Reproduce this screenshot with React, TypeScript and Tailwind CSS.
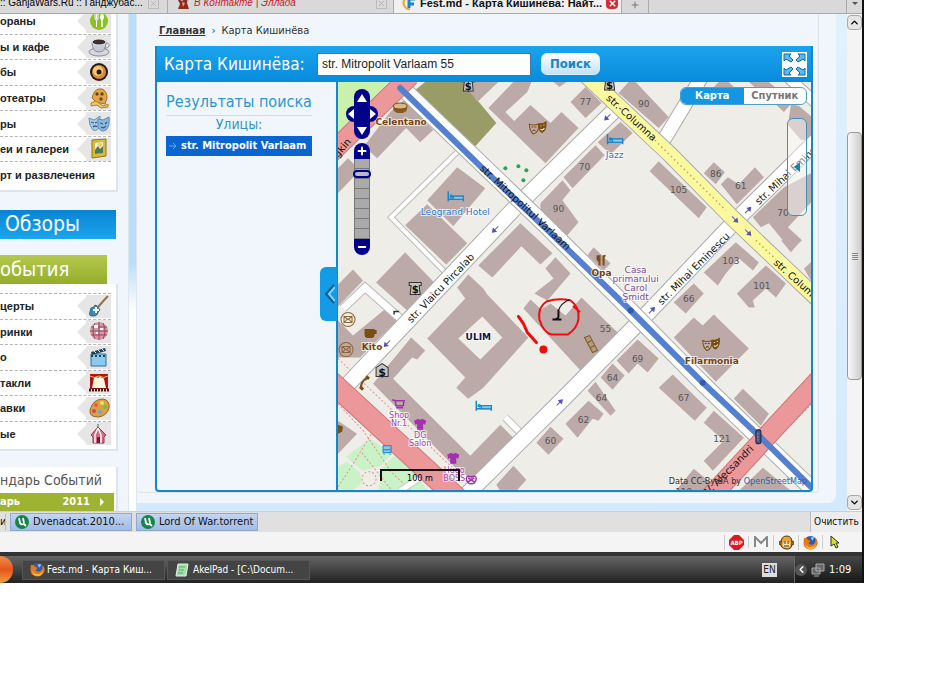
import React from "react";
import { Plus, X, ChevronUp, ChevronDown, ChevronLeft } from "lucide-react";

const places = [
  { title: "ораны", icon: "food" },
  { title: "ы и кафе", icon: "coffee" },
  { title: "бы", icon: "speaker" },
  { title: "отеатры", icon: "cinema" },
  { title: "ры", icon: "masks" },
  { title: "еи и галереи", icon: "frame" },
  { title: "рт и развлечения", icon: "" },
];

const events = [
  { title: "церты", icon: "guitar" },
  { title: "ринки", icon: "disco" },
  { title: "о", icon: "clapper" },
  { title: "такли", icon: "stage" },
  { title: "авки", icon: "palette" },
  { title: "ые", icon: "tent" },
];

const fields = ["415,90 425,82 462,82 496,123 475,146"];

const parks = [
  "346,456 370,438 392,453 381,465 363,470 354,463",
  "383,466 394,455 409,466 428,490 378,490",
  "338,466 347,461 360,472 362,482 352,490 338,490",
];

const buildings = [
  "390,112 404,100 433,130 420,142 406,128 377,158 364,146",
  "338,168 348,158 360,170 338,193",
  "463,82 498,82 477,102",
  "488,108 513,82 531,82 527,92 505,112 514,121 530,105 550,123 561,112 578,128 545,163",
  "553,82 566,82 559,87",
  "585,87 601,103 585,118 570,102",
  "618,93 628,82 635,82 668,117 658,128",
  "620,122 632,133 610,154 597,142",
  "595,145 604,155 572,188 563,177",
  "540,203 562,180 570,190 562,200 578,222 566,236 540,212",
  "658,161 706,207 698,218 649,171",
  "713,162 724,172 715,184 703,173",
  "727,177 738,184 754,167 763,177 736,204 720,184",
  "783,187 812,172 812,200 787,227 801,240 790,250 768,223 760,227 752,217",
  "790,104 798,106 812,118 812,140 800,140 787,125",
  "770,100 776,92 790,104 783,112",
  "712,88 718,82 728,82 734,88",
  "748,82 768,82 775,88 755,88",
  "457,167 485,188 453,226 427,200",
  "405,225 427,204 467,243 446,264",
  "405,252 435,283 407,310 376,282",
  "353,269 363,280 338,306 338,284",
  "387,307 397,320 360,357 338,357 338,320 353,335",
  "478,265 520,223 552,253 540,264 521,246 492,277",
  "555,257 570,273 547,300 534,293 553,278 545,268",
  "523,308 530,299 541,309 550,303 565,315 581,297 617,332 580,370",
  "411,337 425,350 417,359 412,357 393,378 470,455 500,424 513,437 483,468 472,478 458,470 373,383",
  "338,420 357,433 338,453",
  "550,426 563,438 548,454 536,442",
  "496,484 513,465 526,479 516,490 500,490",
  "588,400 603,413 598,420 592,418 577,437 565,423",
  "595,381 615,410 610,415 587,390",
  "612,363 624,375 612,389 600,377",
  "637,339 658,358 647,372 637,363 628,373 616,360",
  "672,374 706,407 694,420 658,387",
  "713,314 748,348 715,381 673,337 693,317 702,325",
  "693,283 703,293 685,313 673,302",
  "735,242 758,262 752,270 738,258 725,273 717,285 703,272",
  "765,265 785,283 775,297 765,288 752,300 754,307 748,307 736,293",
  "593,247 610,263 603,270 587,255",
  "742,388 768,413 760,425 733,398",
  "713,410 743,437 712,470 703,460 723,440 703,422",
  "693,468 710,482 702,490 675,490",
  "762,467 790,490 738,490",
  "780,240 800,240 790,252",
  "803,268 812,260 812,284",
];

const houseNumbers: [number, number, string][] = [
  [585, 105, "77"],
  [643, 107, "90"],
  [584, 170, "70"],
  [558, 212, "90"],
  [678, 193, "105"],
  [715, 177, "86"],
  [740, 189, "61"],
  [782, 216, "70"],
  [730, 264, "103"],
  [761, 289, "101"],
  [688, 302, "66"],
  [605, 331, "55"],
  [637, 361, "69"],
  [612, 380, "64"],
  [601, 400, "64"],
  [583, 422, "62"],
  [550, 443, "60"],
  [683, 400, "67"],
  [721, 441, "121"],
  [683, 494, "119"],
];

const streets: [number, number, number, string][] = [
  [479, 169, 43, "str. Mitropolitul Varlaam"],
  [411, 323, -46, "str. Vlaicu Pircalab"],
  [661, 305, -45, "str. Mihai Eminescu"],
  [758, 205, -43, "str. Mihai Eminescu"],
  [605, 99, 42, "str.-Columna"],
  [772, 263, 42, "str. Columna"],
  [708, 494, -45, "V. Alecsandri"],
  [338, 158, -50, "gkin"],
];

const arrows: [number, number, number][] = [
  [607, 117, 135],
  [495, 229, 135],
  [387, 343, 135],
  [747, 210, -45],
  [651, 310, -45],
  [559, 402, -45],
  [734, 219, 45],
  [747, 232, 45],
];

const SideIcon = ({ name }: { name: string }) => (
  <svg viewBox="0 0 22 22" className="size-[22px]" aria-hidden="true">
    {name === "food" && (
      <>
        <circle cx="11" cy="11" r="9" fill="#8cc220" />
        <path d="M7 4v4q0 2 1.500 2v7M8.500 4v5M10 4v4q0 2-1.500 2" stroke="#fff" strokeWidth="1" fill="none" />
        <ellipse cx="14" cy="7" rx="2" ry="3" fill="#fff" />
        <path d="M14 9v8" stroke="#fff" strokeWidth="1.500" />
      </>
    )}
    {name === "coffee" && (
      <>
        <ellipse cx="11" cy="16" rx="10" ry="4" fill="#d5d6df" stroke="#8c8f9e" />
        <path d="M4 6q0 10 7 10t7-10z" fill="#c5c8d6" stroke="#8c8f9e" />
        <ellipse cx="11" cy="6" rx="7" ry="3" fill="#3b2e2c" stroke="#e8e8ee" />
        <path d="M18 7q4 0 3 3t-5 2" stroke="#8c8f9e" fill="none" />
      </>
    )}
    {name === "speaker" && (
      <>
        <circle cx="11" cy="11" r="9" fill="#251a16" />
        <circle cx="11" cy="11" r="7" fill="#d88b2c" />
        <circle cx="10" cy="10" r="5" fill="#f5c877" />
        <circle cx="11" cy="11" r="2.500" fill="#2b1a12" />
      </>
    )}
    {name === "cinema" && (
      <>
        <path d="M5 8q2-7 9-6 5 2 5 9l-2 6-9-2-4-4z" fill="#e0a947" stroke="#a5701c" />
        <circle cx="9" cy="7" r="1.700" fill="#6d4517" />
        <circle cx="14" cy="7" r="1.700" fill="#6d4517" />
        <circle cx="13" cy="12" r="1.700" fill="#6d4517" />
        <path d="M3 16l5-2 7 5 5-2v3l-7 1-4-3-6 1z" fill="#e9c56b" stroke="#b3812a" />
      </>
    )}
    {name === "masks" && (
      <>
        <path d="M1 5l5 2 6-4v9q-2 7-7 5-4-4-4-12z" fill="#a8cbe8" stroke="#6793bb" />
        <path d="M10 6l5 1 6-3q1 9-3 13-5 3-8-3z" fill="#8db8de" stroke="#5c89b5" />
        <path d="M3 9l3 1M7 10l2-1M5 14q2-2 4 0M12 10l3 1M17 11l2-2M13 14q3 2 5-1" stroke="#315e8b" strokeWidth="1.300" fill="none" />
      </>
    )}
    {name === "frame" && (
      <>
        <path d="M4 2l14-1v17l-14 2z" fill="#d9bb3c" stroke="#94780f" />
        <path d="M7 5l8-1v11l-8 1z" fill="#e3eedd" />
        <path d="M7 12l3-4 2 3 3-3v7l-8 1z" fill="#507a55" />
        <circle cx="12" cy="7" r="2" fill="#f0ce51" />
      </>
    )}
    {name === "guitar" && (
      <>
        <path d="M10 12L18 3l2-2" stroke="#94714d" strokeWidth="2" />
        <path d="M3 13q3 0 4-3l2 1 3 4-2 2q0 4-5 4t-3-4z" fill="#388db4" stroke="#276889" />
        <path d="M8 12v6M5 15h6" stroke="#fff" strokeWidth="2" />
      </>
    )}
    {name === "disco" && (
      <>
        <circle cx="11" cy="10" r="9" fill="#dd97a3" />
        <path d="M3 6h16M2 10h18M3 14h16M7 2q-4 8 0 16M11 1v18M15 2q4 8 0 16" stroke="#8d4a62" strokeWidth="1" fill="none" />
        <path d="M6 4h4v3H6zM12 7h3v2h-3zM8 11h2v2H8z" fill="#fff" />
      </>
    )}
    {name === "clapper" && (
      <>
        <path d="M3 8h15v12H3z" fill="#8bc9ef" stroke="#31739b" />
        <path d="M3 6l14-4 1 3-14 4z" fill="#244353" />
        <path d="M6 5l2 2M10 4l2 2M14 3l2 2" stroke="#cfe5f2" />
        <path d="M3 10h15" stroke="#244353" strokeWidth="2" strokeDasharray="2 2" />
      </>
    )}
    {name === "stage" && (
      <>
        <path d="M2 2h18v15H2z" fill="#b01216" />
        <path d="M6 6q2-2 4 0 2-2 4 0 2 0 2 1l2 9H4z" fill="#fff7de" />
        <path d="M2 4q4 3 9 0 5 3 9 0" stroke="#f2c75a" fill="none" />
        <path d="M1 18h20" stroke="#4d1a10" strokeWidth="3" strokeDasharray="2 1" />
      </>
    )}
    {name === "palette" && (
      <>
        <path d="M2 13Q5 2 15 2q7 1 6 9-2 8-11 9-9 0-8-7z" fill="#d8a24c" stroke="#976420" />
        <circle cx="14" cy="6" r="2" fill="#f0e052" />
        <circle cx="17" cy="10" r="2" fill="#84b83d" />
        <circle cx="8" cy="8" r="2" fill="#e3652d" />
        <circle cx="6" cy="14" r="2" fill="#d4455a" />
        <circle cx="12" cy="15" r="2" fill="#6fa5c9" />
      </>
    )}
    {name === "tent" && (
      <>
        <path d="M10 1v4" stroke="#555" />
        <path d="M10 4L3 12l2 2v6h11v-6l2-2z" fill="#d46a83" stroke="#97344f" />
        <path d="M10 5L7 12v8M10 5l3 7v8" stroke="#fff" strokeWidth="1.400" fill="none" />
        <path d="M9 14h3v6H9z" fill="#64233b" />
      </>
    )}
  </svg>
);

const MenuList = ({ items }: { items: { title: string; icon: string }[] }) => (
  <>
    {items.map((item) => (
      <li
        key={item.title}
        className="flex-1 flex items-center justify-between border-t border-dashed border-[#b5b5b5] min-h-0"
      >
        <a
          href="#"
          className="whitespace-nowrap font-['Liberation_Sans',sans-serif] text-[11px] leading-4 font-bold text-[#222]"
        >
          {item.title}
        </a>
        {item.icon && (
          <span className="flex items-center h-full shrink-0">
            <svg viewBox="0 0 9 18" className="w-[9px] h-[18px]" aria-hidden="true">
              <path d="M9 0v18L0 9z" fill="#e6e6e6" />
            </svg>
            <span className="flex items-center justify-center w-[25px] h-[23px] bg-[#e6e6e6]">
              <SideIcon name={item.icon} />
            </span>
          </span>
        )}
      </li>
    ))}
  </>
);

const Masks = ({ x, y }: { x: number; y: number }) => (
  <g transform={`translate(${x} ${y})`}>
    <path d="M0 2q4 2 9 0 1 8-5 10Q0 9 0 2z" fill="none" stroke="#7a4d10" />
    <path d="M9 1q4 1 8-2 1 9-4 12-5-1-4-10z" fill="#7a4d10" />
    <path d="M2 5h2M5 5h2M3 9q2-2 3 0" stroke="#7a4d10" fill="none" />
    <path d="M11 4h1M14 3h1M11 7q2 2 4-1" stroke="#efede8" fill="none" />
  </g>
);

const Bed = ({ x, y }: { x: number; y: number }) => (
  <g transform={`translate(${x} ${y})`} stroke="#1587c9" fill="none" strokeWidth="1.500">
    <path d="M1 0v10M1 8h15M16 10V5H6v3" />
    <path d="M6 5h10v3H6z" fill="#8fc4e4" strokeWidth="1" />
    <circle cx="4" cy="5" r="1" />
  </g>
);

const Atm = ({ x, y }: { x: number; y: number }) => (
  <g transform={`translate(${x} ${y})`}>
    <path d="M0 0h12v3h-2l1 9H1l1-9H0z" fill="#c9c4bd" stroke="#333" />
    <text x="6" y="11" textAnchor="middle" className="text-[10px] font-bold" fill="#111">
      $
    </text>
  </g>
);

const Shirt = ({ x, y }: { x: number; y: number }) => (
  <path transform={`translate(${x} ${y})`} d="M0 2l4-2q2 2 4 0l4 2-1 4-2-1v6H3V5L1 6z" fill="#a52fb0" />
);

const Mail = ({ x, y }: { x: number; y: number }) => (
  <g transform={`translate(${x} ${y})`} fill="none" stroke="#8c6838">
    <circle r="7" />
    <path d="M-4-3h8v6h-8zl4 3 4-3M-4 3l3-3M4 3L1 0" />
  </g>
);

const Road = ({ d, width, color, casing }: { d: string; width: number; color: string; casing: string }) => (
  <>
    <path d={d} stroke={casing} strokeWidth={width + 2} />
    <path d={d} stroke={color} strokeWidth={width} />
  </>
);

const CityMap = () => (
  <svg
    viewBox="338 82 472 408"
    preserveAspectRatio="xMinYMin slice"
    className="w-full h-[408px] font-['DejaVu_Sans',sans-serif]"
    role="img"
    aria-label="Карта Кишинёва"
  >
    <rect x="338" y="82" width="900" height="900" fill="#efede7" />
    <path d="M338 82h50l-50 54z" fill="#c9f0ad" />
    {fields.map((points) => (
      <polygon key={points} points={points} fill="#999c66" />
    ))}
    {parks.map((points) => (
      <polygon key={points} points={points} fill="#c9f3c6" />
    ))}
    {buildings.map((points) => (
      <polygon key={points} points={points} fill="#bcaaa9" />
    ))}
    <path
      fillRule="evenodd"
      fill="#bcaaa9"
      d="M468 274L483 288 487 294 528 337 483 387 468 398 456 387 465 377 427 338 465 298 457 287ZM482 316L502 337 480 359 458 338Z"
    />

    {/* footways */}
    <g fill="none" stroke="#e88f8f" strokeDasharray="2 2">
      <path d="M338 358l130 124M338 403l26 28 27 40 20 19M338 486l12-18 22-36M362 452l30 38" />
      <path d="M725 490l87-88M341 132l44-44" />
      <circle cx="369" cy="478" r="7" />
    </g>

    {/* roads */}
    <g fill="none">
      <Road d="M457 152L391 217 445 272" width={4} color="#fff" casing="#bbb" />
      <Road d="M343 308L365 287 400 318" width={7} color="#fff" casing="#bbb" />
      <Road d="M505 417L524 436" width={6} color="#fff" casing="#bbb" />
      <Road d="M663 140L704 72" width={13} color="#fff" casing="#aaa" />
      <Road d="M786 76L818 106" width={10} color="#fff" casing="#aaa" />
      <Road d="M400 490L430 470" width={5} color="#fff" casing="#ccc" />
      <Road d="M340 392L517 205 618 106" width={15} color="#fff" casing="#aaa" />
      <Road d="M462 498L560 401 642 318 735 220 816 140" width={15} color="#fff" casing="#aaa" />
      <Road d="M396 82L545 225 632 312 700 381 816 493" width={15} color="#fff" casing="#aaa" />
      <Road d="M584 74L670 155 733 219 816 298" width={15} color="#fbf9a0" casing="#aaa" />
      <path d="M651 137L725 210M755 240L775 259" stroke="#d3a53f" strokeWidth="1.500" strokeDasharray="1.500 3" />
      <Road d="M410 76L330 154" width={18} color="#ec989a" casing="#c77" />
      <Road d="M328 378L460 500" width={20} color="#ec989a" casing="#c77" />
      <Road d="M706 500L820 377" width={19} color="#ec989a" casing="#c77" />
      <path
        d="M400 88L480 166 560 242 630 310 702 382 758 435 812 488"
        stroke="#5580d0"
        strokeWidth="6"
        strokeLinecap="round"
      />
    </g>
    <circle cx="630" cy="310" r="3" fill="#3459ab" />
    <circle cx="702" cy="382" r="3" fill="#3459ab" />

    {arrows.map(([x, y, angle]) => (
      <path
        key={`${x}-${y}`}
        transform={`translate(${x} ${y}) rotate(${angle})`}
        d="M-4 0H1M1-2l3 2-3 2z"
        stroke="#5550b8"
        fill="#5550b8"
      />
    ))}

    {/* icons of places */}
    <Masks x={529} y={122} />
    <Masks x={702} y={338} />
    <Bed x={447} y={191} />
    <Bed x={606} y={134} />
    <Bed x={475} y={400} />
    <Atm x={462} y={79} />
    <Atm x={603} y={78} />
    <Atm x={409} y={282} />
    <path d="M376 367l6-4 6 4v9h-12z" fill="#c9c4bd" stroke="#333" />
    <text x="382" y="375" textAnchor="middle" className="text-[11px] font-bold" fill="#111">
      $
    </text>
    <Shirt x={414} y={418} />
    <Shirt x={447} y={452} />
    <Mail x={348} y={319} />
    <Mail x={346} y={349} />
    <ellipse cx="400" cy="109" rx="7" ry="4" fill="#8a5a22" />
    <ellipse cx="400" cy="106" rx="7" ry="3" fill="#d8b98c" stroke="#7a4d10" />
    <path d="M365 329h9v5q0 3-3 3h-3q-3 0-3-3zM374 330h2v3h-2" fill="#7a4d10" stroke="#7a4d10" />
    <path d="M597 255v4q1 2 2 1v5M599 255v5M603 255v10M605 255q-3 1-2 6" stroke="#7a4d10" strokeWidth="2" fill="none" />
    <path d="M361 388q-1-7 7-11" stroke="#7a4d10" strokeWidth="2" fill="none" />
    <path d="M360 386l3 3M366 376l3 2" stroke="#7a4d10" strokeWidth="3" />
    <path d="M392 399l3 1 1 5h7l1-5h-9M396 407h7" stroke="#a52fb0" fill="none" strokeWidth="1.500" />
    <path d="M383 445h8v7h-8zM383 449h8M384 453v1M390 453v1" stroke="#1587c9" fill="#8fc4e4" />
    <path d="M466 478q0-4 5-2 5-2 5 2-1 5-5 5t-5-5zM468 481l6-4M474 481l-6-4" stroke="#a52fb0" fill="none" strokeWidth="1.500" />
    <path d="M584 337l5-2 8 15-5 2z" fill="#b79c78" stroke="#7a5a2c" />
    <path d="M587 342l4-2M590 347l4-2" stroke="#7a5a2c" />
    <path d="M399 311h-5v3" stroke="#333" fill="none" strokeWidth="1.500" />
    <path d="M338 424l5 2-1 5-4 2z" fill="#7a4d10" />
    <g fill="#27a55c">
      <circle cx="505" cy="168" r="2" />
      <circle cx="518" cy="166" r="2" />
      <circle cx="526" cy="170" r="2" />
      <circle cx="523" cy="180" r="2" />
    </g>
    <rect x="755" y="429" width="5" height="14" rx="2" fill="#45568f" stroke="#223" />
    <path d="M757 432v8" stroke="#99a" strokeDasharray="2 1" />

    {/* labels */}
    <g className="text-[9px]" fill="#555" textAnchor="middle">
      {houseNumbers.map(([x, y, label]) => (
        <text key={`${x}-${y}`} x={x} y={y}>
          {label}
        </text>
      ))}
    </g>
    <g className="text-[10px]" fill="#111">
      {streets.map(([x, y, angle, label]) => (
        <text key={`${x}-${y}`} transform={`translate(${x} ${y}) rotate(${angle})`}>
          {label}
        </text>
      ))}
    </g>
    <g textAnchor="middle" stroke="#fff" strokeWidth="2" strokeOpacity="0.7" paintOrder="stroke">
      <g className="text-[9px] font-bold" fill="#75430c">
        <text x="401" y="125">Celentano</text>
        <text x="372" y="349">Kito</text>
        <text x="601" y="276">Opa</text>
        <text x="711" y="363">Filarmonia</text>
        <text x="478" y="339" fill="#111146">ULIM</text>
      </g>
      <g className="text-[9px]" fill="#2f74d0">
        <text x="455" y="215">Leogrand Hotel</text>
        <text x="614" y="158">Jazz</text>
      </g>
      <g className="text-[9px]" fill="#7d4a94">
        <text x="635" y="273">Casa</text>
        <text x="635" y="282">primarului</text>
        <text x="635" y="291">Carol</text>
        <text x="635" y="300">Şmidt</text>
      </g>
      <g className="text-[8px]" fill="#a345ad">
        <text x="399" y="417">Shop</text>
        <text x="399" y="425">Nr.1</text>
        <text x="420" y="437">DG</text>
        <text x="420" y="445">Salon</text>
        <text x="454" y="472">Hugo</text>
        <text x="454" y="480">BOSS</text>
      </g>
    </g>

    {/* marks drawn by hand */}
    <g fill="none" stroke="#ee0c0c" strokeWidth="2" strokeLinecap="round" strokeLinejoin="round">
      <path d="M570 300q-12-3-24 1-9 6-7 18 4 13 12 15h16q10-6 11-16 1-12-8-18M573 306l6 5" />
      <path d="M518 316l5 7 4 9 9 10" strokeWidth="3" />
      <circle cx="543" cy="349" r="3" fill="#ee0c0c" />
    </g>
    <path d="M569 299q-9 4-11 11" stroke="#111" fill="none" />
    <path d="M558 309v7q0 3-6 3h9" stroke="#111" strokeWidth="2" fill="none" />
  </svg>
);

const MapControls = () => (
  <>
    <div className="absolute left-2 top-[7px] grid grid-cols-[8px_16px_8px] grid-rows-[17px_16px_17px]">
      <div className="absolute inset-x-2 inset-y-0 rounded-full bg-[#00008b]" />
      <div className="absolute inset-x-0 top-[17px] h-4 rounded-full bg-[#00008b]" />
      <button aria-label="Вверх" className="relative col-start-2 flex justify-center items-center">
        <svg viewBox="0 0 10 8" className="w-[10px] h-2"><path d="M5 0l5 8H0z" fill="#fff" /></svg>
      </button>
      <button aria-label="Влево" className="relative col-start-1 row-start-2 flex justify-end items-center">
        <svg viewBox="0 0 6 10" className="w-[6px] h-[10px]"><path d="M6 0v10L0 5z" fill="#fff" /></svg>
      </button>
      <button aria-label="Вправо" className="relative col-start-3 row-start-2 flex justify-start items-center">
        <svg viewBox="0 0 6 10" className="w-[6px] h-[10px]"><path d="M0 0v10l6-5z" fill="#fff" /></svg>
      </button>
      <button aria-label="Вниз" className="relative col-start-2 row-start-3 flex justify-center items-center">
        <svg viewBox="0 0 10 8" className="w-[10px] h-2"><path d="M0 0h10L5 8z" fill="#fff" /></svg>
      </button>
    </div>
    <div className="absolute left-4 top-[61px] w-4 flex flex-col">
      <button aria-label="Приблизить" className="h-4 rounded-t-full bg-[#00008b] text-white flex justify-center items-center">
        <Plus size={12} strokeWidth={4} />
      </button>
      <div className="relative flex flex-col bg-[#aaa]">
        {[1, 2, 3, 4, 5, 6, 7, 8].map((level) => (
          <span key={level} className="h-[10px] border-x border-b border-[#777]" />
        ))}
        <span className="absolute -inset-x-px top-[11px] h-2 rounded-sm border-2 border-[#00008b] bg-[#b9b9c6]" />
      </div>
      <button aria-label="Отдалить" className="h-4 rounded-b-full bg-[#00008b] flex justify-center items-center">
        <span className="w-2 h-[2px] bg-white" />
      </button>
    </div>
    <div className="absolute right-1 top-[5px] w-[127px] h-[18px] flex rounded-md border border-[#4b9fc9] bg-white overflow-hidden text-[11px] leading-4 font-bold">
      <button className="flex-1 bg-[#1496e2] text-white">Карта</button>
      <button className="flex-1 text-[#777]">Спутник</button>
    </div>
    <button
      aria-label="Показать панель"
      className="absolute right-1 top-9 w-5 h-[98px] rounded-md border border-[#3b95b8] bg-white/45 flex justify-center items-center"
    >
      <svg viewBox="0 0 6 10" className="w-[6px] h-[10px]"><path d="M6 0v10L0 5z" fill="#1382b3" /></svg>
    </button>
    <div className="absolute left-[42px] bottom-[9px] w-20 h-3 border-2 border-b-0 border-[#111] text-center text-[9px] leading-[14px]">
      100 m
    </div>
    <p className="absolute right-1 bottom-[3px] text-[9px] leading-3 text-[#333] whitespace-nowrap">
      Data CC-By-SA by <a href="#" className="text-[#2862b8]">OpenStreetMap</a>
    </p>
  </>
);

const SearchHeader = () => (
  <form className="h-9 flex items-center pl-[7px] pr-1 bg-linear-to-b from-[#1ba4ed] to-[#078bdc] text-white">
    <label htmlFor="address" className="w-[153px] shrink-0 text-[17px] leading-6 whitespace-nowrap">
      Карта Кишинёва:
    </label>
    <input
      id="address"
      type="text"
      defaultValue="str. Mitropolit Varlaam 55"
      className="w-[214px] h-[23px] px-1 bg-white border border-[#3a7ca5] font-['Liberation_Sans',sans-serif] text-[12px] text-[#222]"
    />
    <button
      type="button"
      className="ml-[10px] w-[59px] h-[22px] rounded-md border border-[#d9effb] bg-linear-to-b from-white to-[#bfe2f8] text-[13px] leading-4 font-bold text-[#1b84c8]"
    >
      Поиск
    </button>
    <button type="button" aria-label="Развернуть" className="ml-auto bg-white">
      <svg viewBox="0 0 25 25" className="size-[25px]">
        <g fill="#53bff0" stroke="#1666a3">
          <path d="M2 2h7L7 4l4 4-2 2-5-3-2 2z" />
          <path d="M23 2h-7l2 2-4 4 2 2 5-3 2 2z" />
          <path d="M2 23h7l-2-2 4-4-2-2-5 3-2-2z" />
          <path d="M23 23h-7l2-2-4-4 2-2 5 3 2-2z" />
        </g>
      </svg>
    </button>
  </form>
);

const SearchResults = () => (
  <aside className="relative w-[181px] shrink-0 border-r-2 border-[#1787c4] pl-[9px] pr-6 pt-2">
    <h2 className="border-b border-[#dadada] text-[16px] leading-6 pb-px whitespace-nowrap text-[#2b96cd]">
      Результаты поиска
    </h2>
    <h3 className="text-[14px] leading-[17px] text-center text-[#2b96cd]">Улицы:</h3>
    <a
      href="#"
      className="mt-[3px] h-5 flex items-center gap-1 pl-[3px] bg-[#0b65d0] text-white text-[11px] leading-4 font-bold whitespace-nowrap"
    >
      <svg viewBox="0 0 8 8" className="size-2 shrink-0" aria-hidden="true">
        <path d="M0 4h7M4 1l3 3-3 3" stroke="#6aa9ee" fill="none" />
      </svg>
      str. Mitropolit Varlaam
    </a>
    <button
      aria-label="Свернуть"
      className="absolute -right-px top-[185px] w-[17px] h-[54px] rounded-l-md bg-[#149be6] flex justify-center items-center text-[#0b5f93]"
    >
      <svg viewBox="0 0 12 20" className="w-3 h-5" aria-hidden="true">
        <path d="M11 1L3 10l8 9" stroke="#0b5f93" strokeWidth="2" fill="none" />
        <path d="M12 3L6 10l6 7" stroke="#7fd0f7" strokeWidth="2" fill="none" />
      </svg>
    </button>
  </aside>
);

const Sidebar = () => (
  <aside className="w-[118px] shrink-0 flex flex-col items-start overflow-hidden">
    <div className="w-full h-[178px] pr-[5px] pb-[3px] flex flex-col justify-end overflow-hidden bg-white border-r-2 border-b-2 border-[#dde4ea]">
      <ul className="h-[179px] shrink-0 flex flex-col">
        <MenuList items={places} />
      </ul>
    </div>
    <h2 className="mt-[18px] w-[116px] h-[29px] pl-[5px] bg-linear-to-b from-[#0784d3] to-[#1ca5ee] text-white text-[21px] leading-7">
      Обзоры
    </h2>
    <div className="mt-4 w-full">
      <h2 className="w-[107px] h-[29px] bg-linear-to-b from-[#b4c94d] to-[#95ad2a] text-white text-[20px] leading-7">
        обытия
      </h2>
      <div className="bg-white border-r-2 border-b-2 border-[#dde4ea] pt-[9px] pb-[3px] pr-[5px]">
        <ul className="h-[153px] flex flex-col">
          <MenuList items={events} />
        </ul>
      </div>
    </div>
    <section className="mt-4 w-full h-11 bg-white border-r-2 border-[#dde4ea] pr-[2px]">
      <h2 className="text-[14px] leading-[26px] text-[#555] whitespace-nowrap">ндарь Событий</h2>
      <div className="h-[18px] flex items-center bg-[#9db331] text-white text-[11px] leading-4 font-bold">
        <span>арь</span>
        <span className="ml-auto">2011</span>
        <button aria-label="Следующий месяц" className="w-6 flex justify-center">
          <svg viewBox="0 0 4 8" className="w-1 h-2"><path d="M0 0v8l4-4z" fill="#fff" /></svg>
        </button>
      </div>
    </section>
  </aside>
);

const BrowserTabs = () => (
  <div className="h-[14px] flex items-end bg-[#d9d9d9] border-b border-[#aaa] font-['Liberation_Sans',sans-serif] text-[10px] leading-4 whitespace-nowrap overflow-hidden">
    <div className="w-[168px] shrink-0 flex items-center pb-[2px] border-r border-[#aaa]">
      <span>:: GanjaWars.Ru :: Ганджубас...</span>
      <button aria-label="Закрыть" className="ml-auto mr-2 size-[11px] border border-[#bbb] text-[#aaa]"><X size={9} /></button>
    </div>
    <div className="w-[226px] shrink-0 flex items-center gap-1 pl-2 pb-[2px] border-r border-[#aaa] italic text-[#c81a2b]">
      <svg viewBox="0 0 14 14" className="size-[14px]" aria-hidden="true">
        <path d="M1 2l5 3 6-4-1 6 2 6H2l2-5z" fill="#8e2b20" />
        <path d="M6 6l3 1-2 4z" fill="#e7a27b" />
      </svg>
      <span>В Контакте | Эллада</span>
      <button aria-label="Закрыть" className="ml-auto mr-[6px] size-[11px] border border-[#bbb] text-[#aaa]"><X size={9} /></button>
    </div>
    <div className="w-[228px] shrink-0 flex items-center gap-1 pl-2 pb-[2px] bg-[#f0f0f0] border-r border-[#aaa] text-[11px] font-bold text-[#111]">
      <svg viewBox="0 0 14 14" className="size-[14px] shrink-0" aria-hidden="true">
        <path d="M6 1Q0 4 2 9t6 4" fill="none" stroke="#f2a229" strokeWidth="2" />
        <path d="M7 12V3h6M7 8h5" fill="none" stroke="#1b83c8" strokeWidth="3" />
      </svg>
      <span>Fest.md - Карта Кишинёва: Найт...</span>
      <button aria-label="Закрыть" className="ml-auto mr-2 size-3 shrink-0 rounded-sm bg-[#cf2f3b] text-white flex justify-center items-center">
        <X size={9} strokeWidth={4} />
      </button>
    </div>
    <button aria-label="Новая вкладка" className="w-[27px] h-full pb-2 flex justify-center border-r border-[#aaa] text-[#666]">
      <Plus size={10} className="shrink-0" />
    </button>
    <button aria-label="Все вкладки" className="ml-auto w-4 h-full border-l border-[#aaa] flex justify-center">
      <svg viewBox="0 0 6 8" className="w-[6px] h-2"><path d="M0 2h6L3 5z" fill="#555" /></svg>
    </button>
  </div>
);

const ScrollBar = () => (
  <div className="w-[15px] shrink-0 flex flex-col items-stretch bg-[#f4f4f4] pt-px pb-px">
    <button aria-label="Вверх" className="h-[15px] flex justify-center items-center rounded-sm border border-[#aaa] bg-[#e5e5e5]">
      <ChevronUp size={11} strokeWidth={3} />
    </button>
    <div className="flex-1 pt-[102px]">
      <div className="h-[248px] rounded-sm border border-[#999] bg-linear-to-r from-[#f8f8f8] to-[#cfcfcf] flex flex-col justify-center items-center gap-px">
        <span className="w-[6px] h-px bg-[#888]" />
        <span className="w-[6px] h-px bg-[#888]" />
        <span className="w-[6px] h-px bg-[#888]" />
        <span className="w-[6px] h-px bg-[#888]" />
      </div>
    </div>
    <button aria-label="Вниз" className="h-[15px] flex justify-center items-center rounded-sm border border-[#aaa] bg-[#e5e5e5]">
      <ChevronDown size={11} strokeWidth={3} />
    </button>
  </div>
);

const Torrent = ({ title }: { title: string }) => (
  <button className="w-[122px] h-[18px] flex items-center gap-1 pl-1 border border-[#93a9cc] bg-linear-to-b from-[#c3d5f1] to-[#9fbbe6] whitespace-nowrap">
    <svg viewBox="0 0 14 14" className="size-[14px] shrink-0" aria-hidden="true">
      <circle cx="7" cy="7" r="7" fill="#16854a" />
      <path d="M4 3l1 5q1 2 4 1l2 2M8 3l1 5" stroke="#fff" strokeWidth="1.800" fill="none" />
    </svg>
    {title}
  </button>
);

const Firefox = () => (
  <svg viewBox="0 0 16 16" className="size-[15px] shrink-0" aria-hidden="true">
    <circle cx="8" cy="8" r="7" fill="#2b5da8" />
    <path d="M8 3q3-2 4 0l-2 3z" fill="#8fc4ee" />
    <path d="M1 3q2 1 3 0l1 2 3 1-2 3q3 3 6 0 2-3 1-6 4 4 2 8-3 5-8 4.500-6-1-6.500-7z" fill="#e8781a" />
    <path d="M2 9q2 4 6 4t6-4q-1 6-6 6t-6-6z" fill="#f9bd3b" />
  </svg>
);

const StatusBars = () => (
  <footer className="text-[11px] leading-4 text-[#111]">
    <div className="h-[21px] flex items-center bg-[#e0e0e0] border-t border-[#cfcfcf]">
      <span className="w-[6px] shrink-0 overflow-hidden border-r border-[#bbb]">и</span>
      <div className="ml-1 flex gap-1">
        <Torrent title="Dvenadcat.2010..." />
        <Torrent title="Lord Of War.torrent" />
      </div>
      <button className="ml-auto h-full w-[52px] border-l border-[#bbb] bg-[#ececec] text-[10px]">Очистить</button>
    </div>
    <div className="h-5 flex items-center justify-end bg-[#f4f4f4] pr-4">
      <span className="w-6 flex justify-center border-l border-[#ccc]">
        <svg viewBox="0 0 15 15" className="size-[15px]" role="img" aria-label="ABP">
          <path d="M5 0h5l5 5v5l-5 5H5l-5-5V5z" fill="#d91a20" />
          <text x="7.500" y="10" textAnchor="middle" fill="#fff" className="text-[6px] font-bold">ABP</text>
        </svg>
      </span>
      <span className="w-[25px] flex justify-center border-l border-[#ccc]">
        <svg viewBox="0 0 14 12" className="w-[14px] h-3" aria-hidden="true">
          <path d="M1 11V1l6 6 6-6v10" fill="#f8f8f8" stroke="#888" strokeWidth="2" />
        </svg>
      </span>
      <span className="w-[25px] flex justify-center border-l border-[#ccc]">
        <svg viewBox="0 0 15 15" className="size-[15px]" aria-hidden="true">
          <circle cx="2" cy="8" r="2" fill="#e59a31" stroke="#55310b" />
          <circle cx="13" cy="8" r="2" fill="#e59a31" stroke="#55310b" />
          <path d="M2 8q0-7 6-7 5 0 5 7t-6 6-5-6z" fill="#e8a43a" stroke="#55310b" />
          <path d="M4 8q4-4 7 0v3q-3 3-7 0z" fill="#fbe6ae" />
          <path d="M6 6v3M9 6v3M5 11h5" stroke="#332" />
        </svg>
      </span>
      <span className="w-6 flex justify-center border-l border-[#ccc]">
        <Firefox />
      </span>
      <span className="w-6 flex justify-center border-l border-[#ccc]">
        <svg viewBox="0 0 10 14" className="w-[10px] h-[14px]" aria-hidden="true">
          <path d="M1 1l8 7H6l2 4-2 1-2-4-3 2z" fill="#d3e12a" stroke="#333" />
        </svg>
      </span>
    </div>
  </footer>
);

const TaskBar = () => (
  <nav className="h-[31px] flex items-center border-t-4 border-[#333] bg-linear-to-b from-[#666] via-[#444] to-[#222] text-[10px] leading-4 text-white whitespace-nowrap">
    <button aria-label="Пуск" className="w-[13px] h-full rounded-r-full bg-linear-to-b from-[#f08b4c] via-[#e5561b] to-[#f39a3e]" />
    <button className="ml-[9px] w-[143px] h-5 flex items-center gap-[2px] pl-[7px] border border-[#555] bg-[#444]">
      <Firefox />
      Fest.md - Карта Киш...
    </button>
    <button className="ml-[2px] w-[143px] h-5 flex items-center gap-1 pl-[7px] border border-[#555] bg-[#444]">
      <svg viewBox="0 0 14 14" className="size-[14px] shrink-0" aria-hidden="true">
        <path d="M3 1h10l-2 12H1z" fill="#a4dcae" stroke="#dff5e2" />
        <path d="M4 4h6M4 7h5M3 10h5" stroke="#5ba76b" />
      </svg>
      AkelPad - [C:\Docum...
    </button>
    <span className="ml-auto w-[15px] h-[14px] bg-[#ddd] text-[#222] text-center leading-[14px]">EN</span>
    <div className="ml-[17px] h-full w-[68px] flex items-center border-l border-[#666] bg-black/30">
      <button aria-label="Скрытые значки" className="size-3 rounded-full bg-[#555] flex justify-center items-center">
        <ChevronLeft size={11} strokeWidth={3} />
      </button>
      <svg viewBox="0 0 14 14" className="ml-1 size-[14px]" aria-hidden="true">
        <path d="M5 1h8v7H5zM1 5h8v6H1zM3 13h5" fill="#666" stroke="#aaa" />
      </svg>
      <time className="ml-1 text-[11px]">1:09</time>
    </div>
  </nav>
);

const App = () => {
  return (
    <div className="min-h-screen bg-white pr-[66px] font-['DejaVu_Sans_Condensed','Noto_Sans',sans-serif]">
      <div className="border-r-2 border-[#111] overflow-hidden">
        <BrowserTabs />
        <div className="flex bg-[#f1f6fc]">
          <Sidebar />
          <div className="ml-[10px] w-[9px] shrink-0 border-x border-[#dfe6ef] bg-linear-to-b from-[#b9dffb] from-50% to-white to-60%" />
          <main className="flex-1 min-w-0 flex flex-col pr-[11px] bg-linear-to-b from-[#e1f1fc] to-[#d3eafc]">
            <div className="bg-[#f1f6fc] rounded-br-lg flex-1 pb-[10px] pr-[17px] mb-2">
              <div className="h-full pl-[18px] pr-[5px] pt-2 border-r border-b border-[#dce4ec] rounded-b">
                <nav className="pl-1 h-[24px] flex items-start gap-[6px] text-[11px] leading-[18px] text-[#333]">
                  <a href="#" className="font-bold underline">Главная</a>
                  <span className="font-bold text-[#1b84c8]">›</span>
                  <span>Карта Кишинёва</span>
                </nav>
                <section className="border-2 border-t-0 border-[#1787c4] rounded-b-sm">
                  <SearchHeader />
                  <div className="flex">
                    <SearchResults />
                    <div className="relative flex-1 min-w-0">
                      <CityMap />
                      <MapControls />
                    </div>
                  </div>
                </section>
              </div>
            </div>
          </main>
          <ScrollBar />
        </div>
        <StatusBars />
        <TaskBar />
      </div>
    </div>
  );
};

export default App;
